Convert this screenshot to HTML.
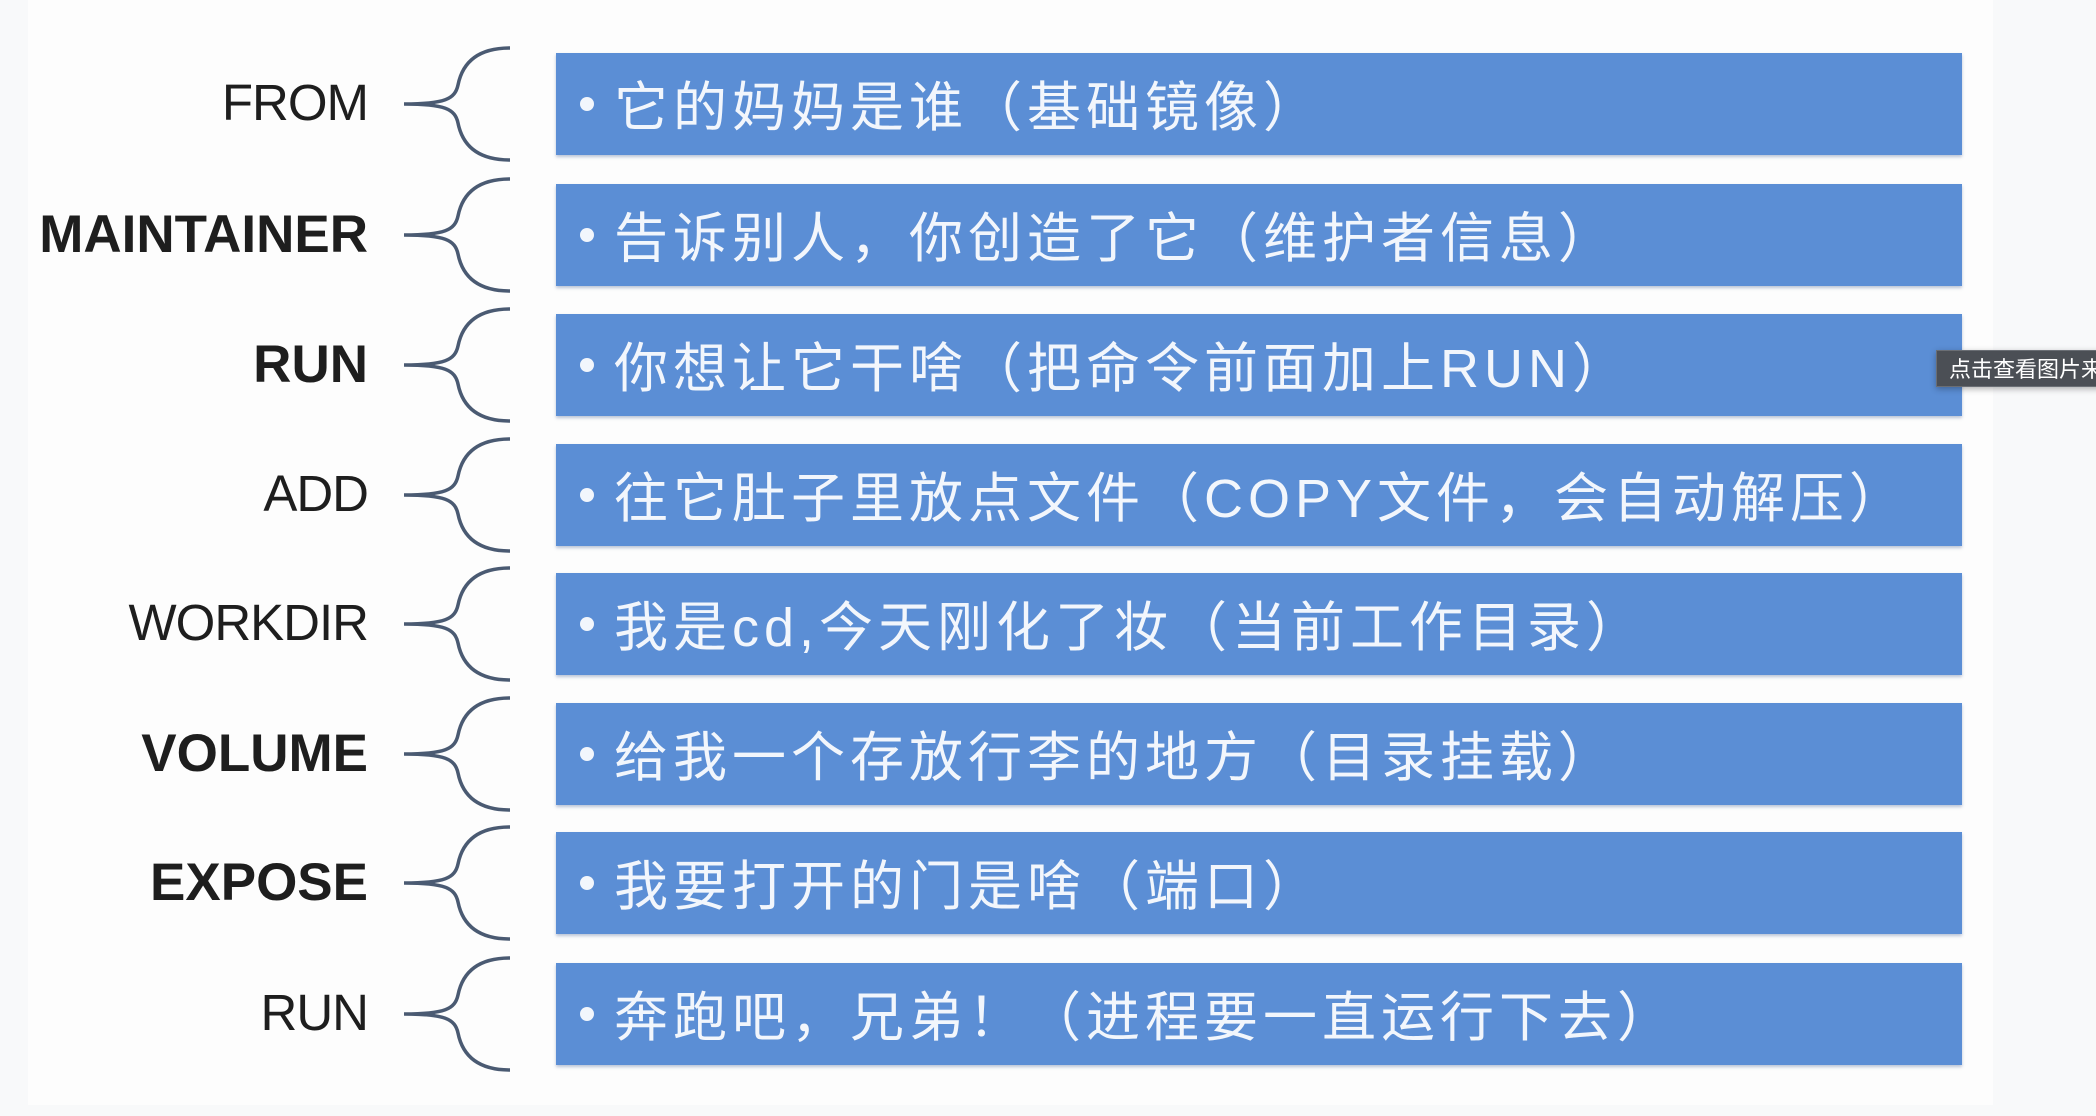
<!DOCTYPE html>
<html><head><meta charset="utf-8"><style>
body{margin:0;width:2096px;height:1116px;background:#f8f9fa;position:relative;overflow:hidden;font-family:"Liberation Sans","Noto Sans CJK SC",sans-serif}
.slide{position:absolute;left:28px;top:0;width:1965px;height:1105px;background:#fdfdfd}
.row{position:absolute;left:0;width:2096px;height:102px}
.lab{position:absolute;right:1728px;top:20px;font-size:51px;color:#1e1e1e;letter-spacing:-1px;white-space:nowrap}
.b{font-weight:bold;font-size:53px;letter-spacing:0}
.box{position:absolute;left:556px;top:0;width:1406px;height:102px;background:#5b8ed5;box-shadow:0 2px 3px rgba(60,90,140,.35)}
.txt{position:absolute;left:614px;top:10px;font-size:54px;color:#f2f6fc;white-space:nowrap;letter-spacing:5px}
.dot{position:absolute;left:580px;top:44px;width:14px;height:14px;border-radius:50%;background:#f2f6fc}
svg.br{position:absolute;left:400px;top:-8px}
.tip{position:absolute;left:1936px;top:350px;width:170px;height:37px;background:#4b4f55;border:1px solid #6a6e74;color:#fff;font-size:22px;line-height:37px;padding-left:12px;box-sizing:border-box;white-space:nowrap;box-shadow:0 2px 6px rgba(0,0,0,.3)}
</style></head><body>
<div class="slide"></div>

<div class="row" style="top:53px"><div class="lab">FROM</div><svg class="br" width="115" height="118"><path d="M110,3 C75,3 62,20 58,40 C55,54 45,59 4,59 C45,59 55,64 58,78 C62,98 75,115 110,115" fill="none" stroke="#4a5a72" stroke-width="3.5"/></svg><div class="box"></div><div class="dot"></div><div class="txt">它的妈妈是谁（基础镜像）</div></div>

<div class="row" style="top:184px"><div class="lab b">MAINTAINER</div><svg class="br" width="115" height="118"><path d="M110,3 C75,3 62,20 58,40 C55,54 45,59 4,59 C45,59 55,64 58,78 C62,98 75,115 110,115" fill="none" stroke="#4a5a72" stroke-width="3.5"/></svg><div class="box"></div><div class="dot"></div><div class="txt">告诉别人，你创造了它（维护者信息）</div></div>

<div class="row" style="top:314px"><div class="lab b">RUN</div><svg class="br" width="115" height="118"><path d="M110,3 C75,3 62,20 58,40 C55,54 45,59 4,59 C45,59 55,64 58,78 C62,98 75,115 110,115" fill="none" stroke="#4a5a72" stroke-width="3.5"/></svg><div class="box"></div><div class="dot"></div><div class="txt">你想让它干啥（把命令前面加上RUN）</div></div>

<div class="row" style="top:444px"><div class="lab">ADD</div><svg class="br" width="115" height="118"><path d="M110,3 C75,3 62,20 58,40 C55,54 45,59 4,59 C45,59 55,64 58,78 C62,98 75,115 110,115" fill="none" stroke="#4a5a72" stroke-width="3.5"/></svg><div class="box"></div><div class="dot"></div><div class="txt">往它肚子里放点文件（COPY文件，会自动解压）</div></div>

<div class="row" style="top:573px"><div class="lab">WORKDIR</div><svg class="br" width="115" height="118"><path d="M110,3 C75,3 62,20 58,40 C55,54 45,59 4,59 C45,59 55,64 58,78 C62,98 75,115 110,115" fill="none" stroke="#4a5a72" stroke-width="3.5"/></svg><div class="box"></div><div class="dot"></div><div class="txt">我是cd,今天刚化了妆（当前工作目录）</div></div>

<div class="row" style="top:703px"><div class="lab b">VOLUME</div><svg class="br" width="115" height="118"><path d="M110,3 C75,3 62,20 58,40 C55,54 45,59 4,59 C45,59 55,64 58,78 C62,98 75,115 110,115" fill="none" stroke="#4a5a72" stroke-width="3.5"/></svg><div class="box"></div><div class="dot"></div><div class="txt">给我一个存放行李的地方（目录挂载）</div></div>

<div class="row" style="top:832px"><div class="lab b">EXPOSE</div><svg class="br" width="115" height="118"><path d="M110,3 C75,3 62,20 58,40 C55,54 45,59 4,59 C45,59 55,64 58,78 C62,98 75,115 110,115" fill="none" stroke="#4a5a72" stroke-width="3.5"/></svg><div class="box"></div><div class="dot"></div><div class="txt">我要打开的门是啥（端口）</div></div>

<div class="row" style="top:963px"><div class="lab">RUN</div><svg class="br" width="115" height="118"><path d="M110,3 C75,3 62,20 58,40 C55,54 45,59 4,59 C45,59 55,64 58,78 C62,98 75,115 110,115" fill="none" stroke="#4a5a72" stroke-width="3.5"/></svg><div class="box"></div><div class="dot"></div><div class="txt">奔跑吧，兄弟！（进程要一直运行下去）</div></div>

<div class="tip">点击查看图片来源</div>
</body></html>
